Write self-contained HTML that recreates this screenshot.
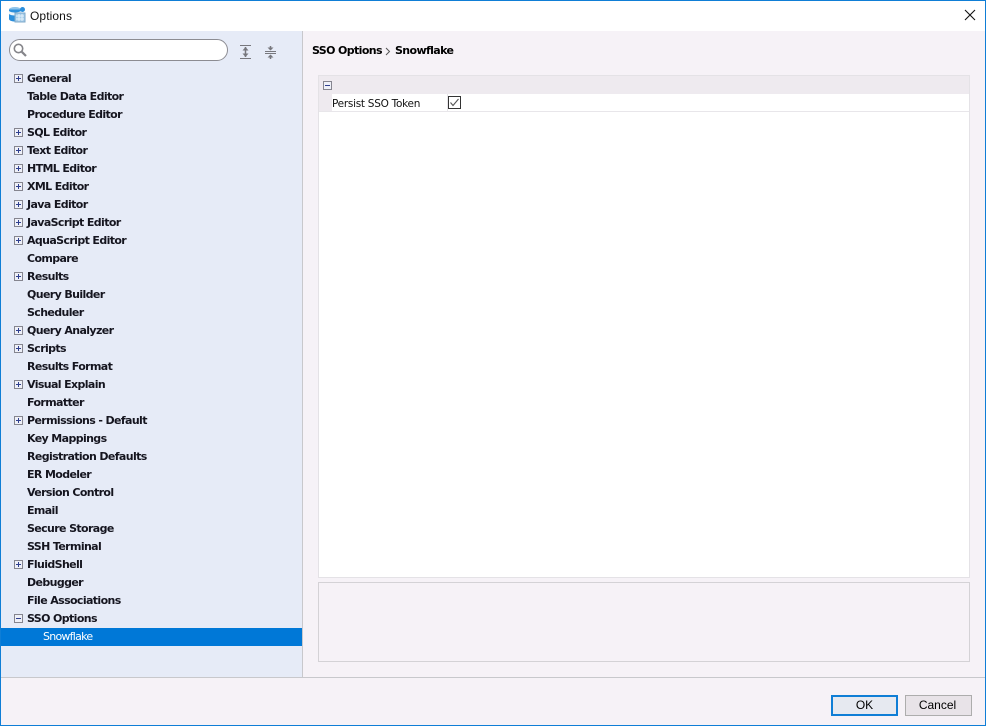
<!DOCTYPE html>
<html><head><meta charset="utf-8"><style>
html,body{margin:0;padding:0}
body{width:986px;height:726px;position:relative;overflow:hidden;background:#f6f2f7;font-family:"DejaVu Sans","Liberation Sans",sans-serif;font-size:11px;color:#000}
.abs{position:absolute}
#frame{left:0;top:0;width:984px;height:724px;border:1px solid #0f7ed6;z-index:9;pointer-events:none}
#title{left:0;top:0;width:986px;height:31px;background:#fff}
#side{left:1px;top:31px;width:301px;height:646px;background:#e6ebf7;border-right:1px solid #c8c8cc}
#bot{left:1px;top:677px;width:984px;height:1px;background:#c8c8cc}
.t{position:absolute;left:27px;height:18px;margin-top:1px;line-height:18px;font-weight:bold;font-size:11px;letter-spacing:-.62px;color:#15151f;white-space:nowrap}
.b{position:absolute;left:14px;width:7px;height:7px;border:1px solid #85858f;background:#eef0f8}
.b:before{content:"";position:absolute;left:1px;top:3px;width:5px;height:1px;background:#2f3f8f}
.b.p:after{content:"";position:absolute;left:3px;top:1px;width:1px;height:5px;background:#2f3f8f}
.btn{position:absolute;top:695px;text-align:center;font-family:"Liberation Sans",sans-serif;font-size:12px}
</style></head><body>
<div class="abs" id="title"></div>
<svg class="abs" style="left:8px;top:6px" width="18" height="18" viewBox="0 0 18 18">
<ellipse cx="7" cy="3.5" rx="6" ry="2.5" fill="#8fc4ea"/><path d="M1 3.5V13c0 1.5 3 2.5 6 2.5s6-1 6-2.5V3.5" fill="#2b8fdc"/><path d="M1 5v3c2 2 9 2 12 0V5c-3 2-10 2-12 0z" fill="#eaf4fb"/>
<rect x="7" y="7" width="10" height="9" fill="#a6cdea" stroke="#7fa9c9"/><path d="M8 10h8M8 13h8M11 8v7M14 8v7" stroke="#e4f1fa" stroke-width="1"/><circle cx="14.500" cy="3.500" r="2.500" fill="#2b8fdc"/>
</svg>
<div class="abs" style="left:30px;top:9px;line-height:15px;font-size:12px;letter-spacing:.1px;color:#111;font-family:'Liberation Sans',sans-serif">Options</div>
<svg class="abs" style="left:964px;top:9px" width="12" height="12" viewBox="0 0 12 12"><path d="M1 1L11 11M11 1L1 11" stroke="#111" stroke-width="1.100" fill="none"/></svg>

<div class="abs" id="side"></div>
<div class="abs" style="left:9px;top:39px;width:217px;height:20px;border:1px solid #8c8c92;border-radius:11px;background:#fff"></div>
<svg class="abs" style="left:12px;top:42px" width="16" height="16" viewBox="0 0 16 16"><circle cx="6.500" cy="6.500" r="4.200" fill="none" stroke="#85858a" stroke-width="1.600"/><path d="M9.800 9.800L14 14" stroke="#85858a" stroke-width="2.200"/></svg>
<svg class="abs" style="left:240px;top:45px" width="11" height="14" viewBox="0 0 11 14"><path d="M0 .5h11M0 13.500h11" stroke="#77777d" stroke-width="1" fill="none"/><path d="M5.500 2v10" stroke="#77777d" stroke-width="1.500"/><path d="M2.500 5.500h6L5.500 2zM2.500 8.500h6l-3 3.500z" fill="#77777d"/></svg>
<svg class="abs" style="left:265px;top:46px" width="11" height="13" viewBox="0 0 11 13"><path d="M0 5.500h11M0 7.500h11" stroke="#77777d" fill="none"/><path d="M5.500 0v4M5.500 9v4" stroke="#77777d" stroke-width="1.500"/><path d="M2.500 1.500h6l-3 3zM2.500 11.500h6l-3-3z" fill="#77777d"/></svg>

<i class="b p" style="top:74px"></i><div class="t" style="top:69px">General</div>
<div class="t" style="top:87px">Table Data Editor</div>
<div class="t" style="top:105px">Procedure Editor</div>
<i class="b p" style="top:128px"></i><div class="t" style="top:123px">SQL Editor</div>
<i class="b p" style="top:146px"></i><div class="t" style="top:141px">Text Editor</div>
<i class="b p" style="top:164px"></i><div class="t" style="top:159px">HTML Editor</div>
<i class="b p" style="top:182px"></i><div class="t" style="top:177px">XML Editor</div>
<i class="b p" style="top:200px"></i><div class="t" style="top:195px">Java Editor</div>
<i class="b p" style="top:218px"></i><div class="t" style="top:213px">JavaScript Editor</div>
<i class="b p" style="top:236px"></i><div class="t" style="top:231px">AquaScript Editor</div>
<div class="t" style="top:249px">Compare</div>
<i class="b p" style="top:272px"></i><div class="t" style="top:267px">Results</div>
<div class="t" style="top:285px">Query Builder</div>
<div class="t" style="top:303px">Scheduler</div>
<i class="b p" style="top:326px"></i><div class="t" style="top:321px">Query Analyzer</div>
<i class="b p" style="top:344px"></i><div class="t" style="top:339px">Scripts</div>
<div class="t" style="top:357px">Results Format</div>
<i class="b p" style="top:380px"></i><div class="t" style="top:375px">Visual Explain</div>
<div class="t" style="top:393px">Formatter</div>
<i class="b p" style="top:416px"></i><div class="t" style="top:411px">Permissions - Default</div>
<div class="t" style="top:429px">Key Mappings</div>
<div class="t" style="top:447px">Registration Defaults</div>
<div class="t" style="top:465px">ER Modeler</div>
<div class="t" style="top:483px">Version Control</div>
<div class="t" style="top:501px">Email</div>
<div class="t" style="top:519px">Secure Storage</div>
<div class="t" style="top:537px">SSH Terminal</div>
<i class="b p" style="top:560px"></i><div class="t" style="top:555px">FluidShell</div>
<div class="t" style="top:573px">Debugger</div>
<div class="t" style="top:591px">File Associations</div>
<i class="b" style="top:614px"></i><div class="t" style="top:609px">SSO Options</div>
<div class="abs" style="left:1px;top:628px;width:301px;height:18px;background:#0078d7"></div>
<div class="t" style="top:627px;left:43px;font-weight:normal;color:#fff;letter-spacing:-.75px">Snowflake</div>

<div class="t" style="left:312px;top:41px;color:#000">SSO Options</div>
<svg class="abs" style="left:385px;top:47px" width="6" height="9" viewBox="0 0 6 9"><path d="M1 1l3.500 3.500L1 8" fill="none" stroke="#555"/></svg>
<div class="t" style="left:395px;top:41px;color:#000">Snowflake</div>

<div class="abs" style="left:318px;top:75px;width:650px;height:501px;background:#fff;border:1px solid #e4e2e6"></div>
<div class="abs" style="left:319px;top:76px;width:650px;height:18px;background:#eeeaef"></div>
<div class="abs" style="left:319px;top:94px;width:13px;height:17px;background:#eeeaef"></div>
<div class="abs" style="left:319px;top:111px;width:650px;height:1px;background:#e8e6ea"></div>
<div class="abs" style="left:447px;top:94px;width:1px;height:17px;background:#e8e6ea"></div>
<i class="b" style="left:323px;top:81px"></i>
<div class="abs" style="left:332px;top:96px;line-height:16px;font-size:10.500px;letter-spacing:-.28px;color:#111;white-space:nowrap">Persist SSO Token</div>
<svg class="abs" style="left:448px;top:96px" width="13" height="13" viewBox="0 0 13 13"><rect x=".5" y=".5" width="12" height="12" fill="#fff" stroke="#333"/><path d="M2.500 6.500L5 9.500L10.500 3" fill="none" stroke="#555" stroke-width="1.100"/></svg>

<div class="abs" style="left:318px;top:582px;width:650px;height:78px;border:1px solid #d4d2d6;background:#f6f2f7"></div>
<div class="abs" id="bot"></div>

<div class="btn" style="left:831px;width:63px;border:2px solid #0f7ed6;background:#e6e9f0;height:17px;line-height:17px">OK</div>
<div class="btn" style="left:905px;width:65px;border:1px solid #adadad;background:#e8e3e8;height:19px;line-height:19px;text-indent:-2px">Cancel</div>
<div class="abs" id="frame"></div>
</body></html>
